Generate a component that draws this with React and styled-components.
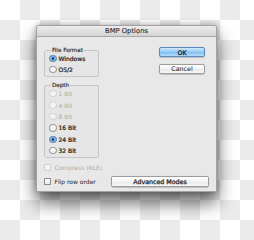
import React from 'react'
import styled, { createGlobalStyle } from 'styled-components'

const Global = createGlobalStyle`
  html, body { margin: 0; padding: 0; }
  body { font-family: "DejaVu Sans", "Liberation Sans", sans-serif; }
`

const Page = styled.div`
  width: 254px;
  height: 240px;
  box-sizing: border-box;
  padding: 25px 0 0 36px;
  background: repeating-conic-gradient(#ebebeb 0 25%, #ffffff 0 50%) 0 0 / 40px 40px;
  overflow: hidden;
`

const Dialog = styled.div`
  width: 181px;
  height: 167px;
  box-sizing: border-box;
  display: flex;
  flex-direction: column;
  background: #e8e8e8;
  border: 1px solid rgba(0, 0, 0, 0.3);
  border-radius: 3px 3px 1px 1px;
  box-shadow: 0 11px 18px rgba(0, 0, 0, 0.6), 0 0 6px rgba(0, 0, 0, 0.3);
`

const TitleBar = styled.div`
  height: 10px;
  flex: none;
  display: flex;
  align-items: center;
  justify-content: center;
  background: linear-gradient(#ececec, #d4d4d4);
  border-bottom: 1px solid #a8a8a8;
  border-radius: 2px 2px 0 0;
  font-size: 6.8px;
  color: #333;
  -webkit-text-stroke: 0.15px #333;
`

const Body = styled.div`
  flex: 1;
  display: flex;
  flex-direction: column;
  padding: 10px 7px 0 7px;
`

const Main = styled.div`
  display: flex;
  justify-content: space-between;
  align-items: flex-start;
`

const Column = styled.div`
  display: flex;
  flex-direction: column;
  gap: ${({ gap }) => gap || 0}px;
  margin-right: ${({ inset }) => inset || 0}px;
`

const Group = styled.fieldset`
  width: 55px;
  box-sizing: border-box;
  margin: 0;
  padding: 0 0 1px 4px;
  min-width: 0;
  border: 1px solid #c6c6c6;
  border-radius: 2px;
  background: rgba(0, 0, 0, 0.012);
`

const Legend = styled.legend`
  padding: 0 1px;
  margin-left: 2px;
  font-size: 5.6px;
  line-height: 6px;
  color: #3a3a3a;
  -webkit-text-stroke: 0.2px #3a3a3a;
`

const Row = styled.div`
  height: ${({ h }) => h || 11}px;
  display: flex;
  align-items: center;
  gap: 2px;
  font-size: 6px;
  color: ${({ disabled }) => (disabled ? '#ababab' : '#222')};
  -webkit-text-stroke: ${({ bold }) => (bold ? '0.22px #222' : '0')};
`

const Radio = styled.span`
  width: 5.5px;
  height: 5.5px;
  flex: none;
  border-radius: 50%;
  display: flex;
  align-items: center;
  justify-content: center;
  border: 0.6px solid ${({ on, disabled }) => (on ? '#4a78a8' : disabled ? '#cfcfcf' : '#8c8c8c')};
  background: ${({ on, disabled }) =>
    on
      ? 'radial-gradient(circle, #1d2f45 0 24%, #5ea6e6 34%, #b4d9f6 100%)'
      : disabled
      ? '#f3f3f3'
      : 'linear-gradient(#ffffff, #ececec)'};
`

const Check = styled.span`
  width: 5px;
  height: 5px;
  flex: none;
  margin-right: 1.5px;
  border-radius: 0.5px;
  border: 0.6px solid ${({ disabled }) => (disabled ? '#d0d0d0' : '#8c8c8c')};
  background: ${({ disabled }) => (disabled ? '#f2f2f2' : 'linear-gradient(#ffffff, #e8e8e8)')};
`

const Button = styled.div`
  width: ${({ w }) => w}px;
  height: ${({ h }) => h || 10}px;
  box-sizing: border-box;
  display: flex;
  align-items: center;
  justify-content: center;
  border-radius: 2px;
  font-size: 6.3px;
  color: #1e1e1e;
  -webkit-text-stroke: ${({ bold }) => (bold ? '0.25px #1e1e1e' : '0.05px #1e1e1e')};
  border: 0.8px solid ${({ primary }) => (primary ? '#5b88b8' : '#9c9c9c')};
  background: ${({ primary }) =>
    primary
      ? 'linear-gradient(#d3e9fb, #92c9f4 50%, #7dbdf2 51%, #b6dcfa)'
      : 'linear-gradient(#ffffff, #f3f3f3 50%, #e9e9e9 51%, #f8f8f8)'};
  box-shadow: 0 0.5px 1px rgba(0, 0, 0, 0.18);
`

const Footer = styled.div`
  margin-top: 3px;
  display: flex;
  justify-content: space-between;
  align-items: flex-end;
`

const depths = [
  { label: '1 Bit', disabled: true },
  { label: '4 Bit', disabled: true },
  { label: '8 Bit', disabled: true },
  { label: '16 Bit' },
  { label: '24 Bit', on: true },
  { label: '32 Bit' },
]

export default function App() {
  return (
    <Page>
      <Global />
      <Dialog>
        <TitleBar>BMP Options</TitleBar>
        <Body>
          <Main>
            <Column gap={5}>
              <Group>
                <Legend>File Format</Legend>
                <Row bold>
                  <Radio on />
                  Windows
                </Row>
                <Row bold>
                  <Radio />
                  OS/2
                </Row>
              </Group>
              <Group>
                <Legend>Depth</Legend>
                {depths.map((d) => (
                  <Row key={d.label} h={11.4} bold={!d.disabled} disabled={d.disabled}>
                    <Radio on={d.on} disabled={d.disabled} />
                    {d.label}
                  </Row>
                ))}
              </Group>
            </Column>
            <Column gap={7} inset={4}>
              <Button w={46} primary bold>OK</Button>
              <Button w={46} h={9.5}>Cancel</Button>
            </Column>
          </Main>
          <Footer>
            <Column gap={2}>
              <Row h={12} disabled>
                <Check disabled />
                Compress (RLE)
              </Row>
              <Row h={12}>
                <Check />
                Flip row order
              </Row>
            </Column>
            <Button w={98} h={11} bold>Advanced Modes</Button>
          </Footer>
        </Body>
      </Dialog>
    </Page>
  )
}
